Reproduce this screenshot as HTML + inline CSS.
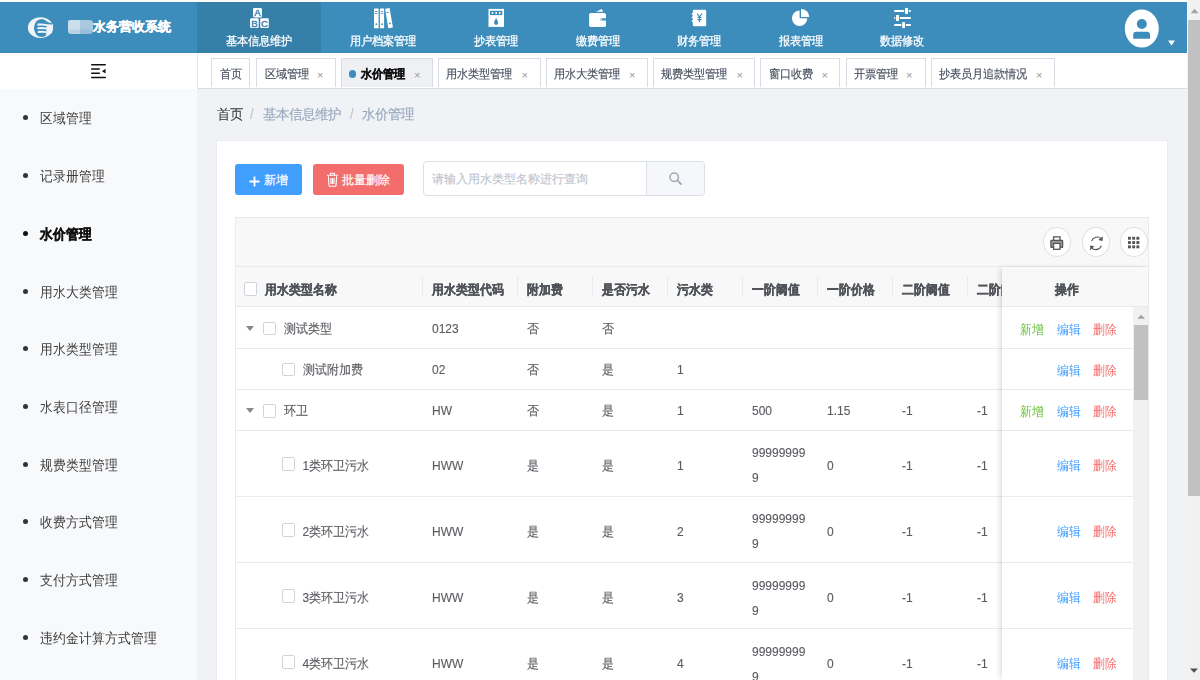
<!DOCTYPE html>
<html><head><meta charset="utf-8">
<style>
*{margin:0;padding:0;box-sizing:border-box}
html,body{width:1200px;height:680px;overflow:hidden;background:#f0f2f5;font-family:"Liberation Sans",sans-serif;}
.sk{-webkit-text-stroke:0.25px currentColor}
.sk2{-webkit-text-stroke:0.12px currentColor}
.a{position:absolute;white-space:nowrap}
#top{left:0;top:0;width:1187px;height:2px;background:#fefcfb}
#hdr{left:0;top:2px;width:1187px;height:51px;background:#3c8dbc}
.nav{top:2px;height:51px;color:#fff;font-size:11px;text-align:center}
.nav .t{position:absolute;left:0;right:0;top:31.5px;line-height:14px;-webkit-text-stroke:0.25px #fff;transform:scaleY(1.07);transform-origin:50% 60%}
.nav.act{background:#367fa9}
#side{left:0;top:89px;width:197px;height:591px;background:#f8f9fb}
#tog{left:0;top:53px;width:197px;height:36px;background:#fff}
#tabs{left:197px;top:53px;width:990px;height:36px;background:#fff;border-bottom:1px solid #d8dce5;border-left:1px solid #e6e6e6}
.tab{top:58px;height:29px;border:1px solid #d8dce5;border-bottom:none;background:#fff;font-size:11px;color:#495060;line-height:31px}
.tab .t{position:absolute;top:0;-webkit-text-stroke:0.15px currentColor;transform:scaleY(1.07);transform-origin:50% 53%}
.tab .x{position:absolute;font-size:11px;color:#999;top:0.5px}
.mi{left:0;width:197px;font-size:13px;color:#3d3d3d;height:20px;line-height:20px}
.mi .d{position:absolute;left:23px;top:6.5px;width:5px;height:5px;border-radius:50%;background:#333}
.mi .t{position:absolute;left:40px;top:0.6px;transform:scaleY(1.1);transform-origin:50% 55%}
#sb{left:1187px;top:0;width:13px;height:680px;background:#f1f1f1}
.bc{top:104.5px;font-size:13.25px;line-height:20px;-webkit-text-stroke:0.15px currentColor;transform:scaleY(1.04);transform-origin:50% 52%}
#card{left:216px;top:140px;width:951.5px;height:545px;background:#fff;border:1px solid #e9ebef}
.btn{top:164px;height:30.5px;border-radius:3px;color:#fff;font-size:12px;line-height:32px;-webkit-text-stroke:0.2px #fff}
#tbl{left:235px;top:217px;width:914px;height:463px;border:1px solid #e8eaec;border-bottom:none;background:#fff}
#tbar{left:236px;top:218px;width:912px;height:49px;background:#f8f8f9;border-bottom:1px solid #e8eaec}
#thd{left:236px;top:267px;width:912px;height:40px;background:#f8f8f9;border-bottom:1px solid #e8eaec}
.th{top:280px;font-size:12px;font-weight:bold;color:#505459;line-height:20px;transform:scaleY(1.1);transform-origin:50% 50%;-webkit-text-stroke:0.3px currentColor}
.sep{top:276px;width:1px;height:21px;background:#e8eaec}
.row{left:236px;width:897px;border-bottom:1px solid #e8eaec}
.td{font-size:12px;color:#5a5c61;line-height:20px;transform:scaleY(1.08);transform-origin:50% 50%;-webkit-text-stroke:0.12px currentColor}
.cb{width:13px;height:13.5px;border:1.4px solid #cfd4dc;border-radius:2px;background:#fff}
.tri{width:0;height:0;border-left:4.5px solid transparent;border-right:4.5px solid transparent;border-top:5px solid #888}
.op{font-size:12px;line-height:20px;transform:scaleY(1.1);transform-origin:50% 50%}
.circ{top:226.5px;width:28px;height:30.5px;border:1px solid #dcdfe6;border-radius:50%;background:#fff}
</style></head><body>
<div class="a" id="top"></div>
<div class="a" id="hdr"></div>
<!-- logo -->
<svg class="a" style="left:0;top:0" width="200" height="53" viewBox="0 0 200 53">
<ellipse cx="40.45" cy="27.7" rx="12.55" ry="10.4" fill="#eef4f8"/>
<ellipse cx="41.6" cy="28" rx="7.6" ry="9.1" fill="#3c8dbc"/>
<path d="M37.4 23.6 Q42 23 46.5 24 L53 24.5 L53 26 L46.8 25.9 Q42 25.3 37.4 25.8Z" fill="#eef4f8"/>
<path d="M37.4 27.3 Q42 26.8 46.8 27.6 L46.8 29.4 Q42 28.9 37.4 29.3Z" fill="#eef4f8"/>
<path d="M37.8 31.0 Q42 30.6 46.3 31.3 L46.3 33.0 Q42 32.5 37.8 33.0Z" fill="#eef4f8"/>
<path d="M46.8 24.2 L53.2 24.5 L52 33 L46 35.5 Z" fill="#eef4f8"/>
<path d="M45.5 21.6 L52.5 23.6 L52.5 24.5 L46.8 24.2Z" fill="#3c8dbc"/>
</svg>
<div class="a" style="left:68px;top:19.5px;width:12px;height:14.5px;background:#cbdfeb;border-radius:2px 0 0 3px;filter:blur(0.5px)"></div>
<div class="a" style="left:80px;top:19.5px;width:12.5px;height:14.5px;background:#a8c8dd;border-radius:0 3px 4px 0;filter:blur(0.5px)"></div>
<div class="a" style="left:68px;top:30px;width:24px;height:4px;background:rgba(60,141,188,0.18);filter:blur(0.8px)"></div>
<div class="a" style="left:93px;top:19px;font-size:13px;font-weight:bold;color:#fff;line-height:16px;-webkit-text-stroke:0.3px #fff">水务营收系统</div>

<div class="a nav act" style="left:197px;width:124px"><div class="t">基本信息维护</div></div>
<div class="a nav" style="left:321px;width:124px"><div class="t">用户档案管理</div></div>
<div class="a nav" style="left:445px;width:102px"><div class="t">抄表管理</div></div>
<div class="a nav" style="left:547px;width:101px"><div class="t">缴费管理</div></div>
<div class="a nav" style="left:648px;width:102px"><div class="t">财务管理</div></div>
<div class="a nav" style="left:750px;width:101px"><div class="t">报表管理</div></div>
<div class="a nav" style="left:851px;width:102px"><div class="t">数据修改</div></div>

<!-- nav icons -->
<svg class="a" style="left:0;top:0" width="1187" height="53" viewBox="0 0 1187 53">
 <g fill="#fff">
  <rect x="253" y="8" width="9" height="9.4" rx="1.3"/>
  <rect x="250.1" y="18.2" width="8.6" height="9.9" rx="1.3"/>
  <rect x="260.2" y="18.2" width="8.6" height="9.9" rx="1.3"/>
 </g>
 <g fill="#367fa9" font-family="Liberation Sans" font-size="9.6" stroke="#367fa9" stroke-width="0.35">
  <text x="257.5" y="16" text-anchor="middle">A</text>
  <text x="254.4" y="26.8" text-anchor="middle">B</text>
  <text x="264.5" y="26.8" text-anchor="middle">C</text>
 </g>
 <!-- binders -->
 <g fill="#fff">
  <rect x="374" y="8.5" width="4.6" height="19.8" rx="0.5"/>
  <rect x="379.9" y="8.5" width="4.2" height="19.8" rx="0.5"/>
  <path d="M385.1 8.7 L389.6 8 L392.9 27.4 L388.3 28.3Z"/>
 </g>
 <g fill="#3c8dbc">
  <rect x="375" y="11.2" width="2.6" height="0.8"/><rect x="375" y="13.2" width="2.6" height="0.8"/>
  <rect x="380.7" y="11.2" width="2.6" height="0.8"/><rect x="380.7" y="13.2" width="2.6" height="0.8"/>
  <circle cx="376.3" cy="24.2" r="0.9"/><circle cx="382" cy="24.2" r="0.9"/><circle cx="389.9" cy="23.3" r="0.9"/>
  <path d="M386.3 12.4 L388.7 12 L388.9 12.8 L386.5 13.2Z"/>
 </g>
 <!-- meter -->
 <rect x="488.5" y="8.9" width="15.5" height="18" fill="#fff"/>
 <rect x="490" y="10.8" width="12.3" height="4.3" fill="#3c8dbc"/>
 <g fill="#fff"><rect x="491.8" y="12" width="1.4" height="2"/><rect x="495.5" y="12" width="1.4" height="2"/><rect x="499.1" y="12" width="1.4" height="2"/></g>
 <path d="M496.1 18 Q494 21.5 494 22.8 A2.1 2.1 0 0 0 498.2 22.8 Q498.2 21.5 496.1 18Z" fill="#3c8dbc"/>
 <!-- wallet -->
 <rect x="589.1" y="12.9" width="16.9" height="14" rx="1.6" fill="#fff"/>
 <path d="M596 11.8 L601.8 8.9 L603.2 11.8Z" fill="#fff"/>
 <rect x="600.5" y="18.2" width="6" height="2.4" rx="1.2" fill="#3c8dbc"/>
 <circle cx="601.8" cy="19.4" r="0.6" fill="#fff"/>
 <!-- yen book -->
 <rect x="692.8" y="9.8" width="13.4" height="16.4" rx="1.2" fill="#fff"/>
 <g fill="#fff"><circle cx="692.6" cy="14" r="0.9"/><circle cx="692.6" cy="17.5" r="0.9"/><circle cx="692.6" cy="21" r="0.9"/></g>
 <path d="M697.2 13.6 L699.5 17 L701.8 13.6 M699.5 17 L699.5 22.3 M697.5 17.5 H701.5 M697.5 19.6 H701.5" stroke="#3c8dbc" stroke-width="1.1" fill="none"/>
 <!-- pie -->
 <path d="M799.6 10.5 A7.7 7.7 0 1 0 807.3 18.2 L799.6 18.2Z" fill="#fff"/>
 <path d="M801 8.9 A8.2 8.2 0 0 1 809.2 17.1 L801 17.1Z" fill="#fff"/>
 <!-- sliders -->
 <g fill="#fff">
  <rect x="894" y="10.1" width="17" height="1.8" rx="0.9"/>
  <rect x="894" y="17.1" width="17" height="1.8" rx="0.9"/>
  <rect x="894" y="24.1" width="17" height="1.8" rx="0.9"/>
 </g>
 <g fill="#3c8dbc">
  <rect x="904.2" y="7.4" width="4.6" height="7"/>
  <rect x="895.2" y="14.6" width="4.6" height="6.8"/>
  <rect x="901.4" y="21.6" width="4.4" height="7"/>
 </g>
 <g fill="#fff">
  <rect x="905" y="7.9" width="3" height="6"/>
  <rect x="896" y="15.1" width="3" height="5.8"/>
  <rect x="902.2" y="22.1" width="2.8" height="6"/>
 </g>
 <!-- avatar -->
 <ellipse cx="1141.8" cy="28.6" rx="17" ry="19" fill="#fff"/>
 <circle cx="1141.8" cy="24" r="5" fill="#3c8dbc"/>
 <path d="M1133.2 38.8 V34.8 Q1133.2 31.8 1136.2 31.8 H1147 Q1150 31.8 1150 34.8 V38.8Z" fill="#3c8dbc"/>
 <path d="M1168 40.6 H1175 L1171.5 45.4Z" fill="#fff"/>
</svg>

<div class="a" id="tog"></div>
<svg class="a" style="left:90px;top:63px" width="17" height="16" viewBox="0 0 17 16">
 <g fill="#111">
  <rect x="1" y="1" width="15" height="1.5" rx="0.7"/>
  <rect x="1" y="5.2" width="9" height="1.5" rx="0.7"/>
  <rect x="1" y="9.5" width="9" height="1.5" rx="0.7"/>
  <rect x="1" y="13.7" width="15" height="1.5" rx="0.7"/>
  <path d="M15.5 5.8 L12 8.2 L15.5 10.6Z"/>
 </g>
</svg>
<div class="a" id="side"></div>
<div class="a" id="tabs"></div>

<!-- tabs -->
<div class="a tab" style="left:211px;width:39px;"><span class="t" style="left:8px">首页</span></div>
<div class="a tab" style="left:256px;width:80px;"><span class="t" style="left:7.5px">区域管理</span><span class="x" style="left:60px">×</span></div>
<div class="a tab" style="left:341px;width:91.5px;background:#eef0f4"><span style="position:absolute;left:6.5px;top:11px;width:7.5px;height:7.5px;border-radius:50%;background:#3c8dbc"></span><span class="t" style="left:19px;font-weight:bold;color:#111;-webkit-text-stroke:0.3px #111">水价管理</span><span class="x" style="left:72px">×</span></div>
<div class="a tab" style="left:438px;width:102.5px;"><span class="t" style="left:7px">用水类型管理</span><span class="x" style="left:82.5px">×</span></div>
<div class="a tab" style="left:545.5px;width:102.5px;"><span class="t" style="left:7.25px">用水大类管理</span><span class="x" style="left:82.5px">×</span></div>
<div class="a tab" style="left:653px;width:101.5px;"><span class="t" style="left:7.25px">规费类型管理</span><span class="x" style="left:82.5px">×</span></div>
<div class="a tab" style="left:760px;width:80px;"><span class="t" style="left:7.75px">窗口收费</span><span class="x" style="left:60.5px">×</span></div>
<div class="a tab" style="left:845.5px;width:80px;"><span class="t" style="left:7.25px">开票管理</span><span class="x" style="left:59.5px">×</span></div>
<div class="a tab" style="left:930.5px;width:124px;"><span class="t" style="left:7.25px">抄表员月追款情况</span><span class="x" style="left:104.5px">×</span></div>

<!-- sidebar menu -->
<div class="a mi" style="top:108px"><span class="d"></span><span class="t">区域管理</span></div>
<div class="a mi" style="top:166px"><span class="d"></span><span class="t">记录册管理</span></div>
<div class="a mi" style="top:224px;font-weight:bold;color:#111"><span class="d" style="background:#111"></span><span class="t" style="-webkit-text-stroke:0.35px #111">水价管理</span></div>
<div class="a mi" style="top:282px"><span class="d"></span><span class="t">用水大类管理</span></div>
<div class="a mi" style="top:339.5px"><span class="d"></span><span class="t">用水类型管理</span></div>
<div class="a mi" style="top:397px"><span class="d"></span><span class="t">水表口径管理</span></div>
<div class="a mi" style="top:455px"><span class="d"></span><span class="t">规费类型管理</span></div>
<div class="a mi" style="top:512.5px"><span class="d"></span><span class="t">收费方式管理</span></div>
<div class="a mi" style="top:570px"><span class="d"></span><span class="t">支付方式管理</span></div>
<div class="a mi" style="top:628px"><span class="d"></span><span class="t">违约金计算方式管理</span></div>

<!-- breadcrumb -->
<div class="a bc" style="left:217px;color:#303133;-webkit-text-stroke:0">首页</div>
<div class="a bc" style="left:250px;color:#c0c4cc">/</div>
<div class="a bc" style="left:263px;color:#97a8be">基本信息维护</div>
<div class="a bc" style="left:350px;color:#c0c4cc">/</div>
<div class="a bc" style="left:362px;color:#97a8be">水价管理</div>

<div class="a" id="card"></div>
<div class="a btn" style="left:235px;width:67px;background:#409eff">
 <svg class="a" style="left:13.5px;top:12px" width="11" height="11" viewBox="0 0 11 11"><path d="M5.5 0.5V10.5M0.5 5.5H10.5" stroke="#fff" stroke-width="1.8"/></svg>
 <span class="a" style="left:28.5px;top:0">新增</span>
</div>
<div class="a btn" style="left:313px;width:91px;background:#f46d6d">
 <svg class="a" style="left:12.5px;top:8px" width="13" height="15" viewBox="0 0 13 15"><path d="M1 3.2H12 M4.6 3.2V1.2H8.4V3.2 M2.4 4.2 L3 13.6 Q3.1 14.2 3.7 14.2 H9.3 Q9.9 14.2 10 13.6 L10.6 4.2 M5 6V12 M6.5 6V12 M8 6V12" stroke="#fff" stroke-width="1.1" fill="none"/></svg>
 <span class="a" style="left:28.5px;top:0">批量删除</span>
</div>
<!-- search -->
<div class="a" style="left:423px;top:161px;width:282px;height:35px;border:1px solid #dcdfe6;border-radius:4px;background:#fff;overflow:hidden">
 <div class="a" style="left:222px;top:0;width:59px;height:33px;background:#f5f7fa;border-left:1px solid #dcdfe6"></div>
 <span class="a" style="left:7.5px;top:6.5px;font-size:12.2px;line-height:20px;color:#c0c4cc;-webkit-text-stroke:0.15px #c0c4cc">请输入用水类型名称进行查询</span>
 <svg class="a" style="left:245px;top:10px" width="13" height="13" viewBox="0 0 13 13"><circle cx="5.2" cy="5.2" r="4.2" stroke="#a8abb2" stroke-width="1.6" fill="none"/><path d="M8.3 8.3L12 12" stroke="#a8abb2" stroke-width="1.8" stroke-linecap="round"/></svg>
</div>

<!-- table -->
<div class="a" id="tbl"></div>
<div class="a" id="tbar"></div>
<div class="a circ" style="left:1042.8px"></div>
<div class="a circ" style="left:1082.2px"></div>
<div class="a circ" style="left:1120.2px"></div>
<svg class="a" style="left:1040px;top:230px" width="110" height="24" viewBox="1040 230 110 24">
 <g stroke="#555" stroke-width="1.3">
  <path d="M1053.6 240.2 V236.8 H1060 V240.2" fill="none"/>
  <path d="M1053.4 247.4 H1051.4 Q1050.9 247.4 1050.9 246.9 V241 Q1050.9 240.3 1051.6 240.3 H1061.9 Q1062.6 240.3 1062.6 241 V246.9 Q1062.6 247.4 1062.1 247.4 H1060.2" fill="#9a9a9a"/>
  <rect x="1053.6" y="243.4" width="6.4" height="5.9" fill="#fff"/>
 </g>
 <g fill="none" stroke="#555" stroke-width="1.15">
  <path d="M1091.6 241.2 A5.9 5.9 0 0 1 1101.2 238.6"/>
  <path d="M1101.4 245.6 A5.9 5.9 0 0 1 1091.6 247.8"/>
 </g>
 <path d="M1102.8 236.2 L1102.6 240.9 L1098.4 240.1Z" fill="#555"/>
 <path d="M1090 250.2 L1090.2 245.5 L1094.4 246.3Z" fill="#555"/>
 <g fill="#555">
  <rect x="1128" y="236.8" width="2.9" height="2.9"/><rect x="1132.2" y="236.8" width="2.9" height="2.9"/><rect x="1136.4" y="236.8" width="2.9" height="2.9"/>
  <rect x="1128" y="241.1" width="2.9" height="2.9"/><rect x="1132.2" y="241.1" width="2.9" height="2.9"/><rect x="1136.4" y="241.1" width="2.9" height="2.9"/>
  <rect x="1128" y="245.4" width="2.9" height="2.9"/><rect x="1132.2" y="245.4" width="2.9" height="2.9"/><rect x="1136.4" y="245.4" width="2.9" height="2.9"/>
 </g>
</svg>

<div class="a" id="thd"></div>
<div class="a cb" style="left:244px;top:282px"></div>
<div class="a th" style="left:265px">用水类型名称</div>
<div class="a sep" style="left:422px"></div>
<div class="a th" style="left:432px">用水类型代码</div>
<div class="a sep" style="left:517px"></div>
<div class="a th" style="left:527px">附加费</div>
<div class="a sep" style="left:592px"></div>
<div class="a th" style="left:602px">是否污水</div>
<div class="a sep" style="left:667px"></div>
<div class="a th" style="left:677px">污水类</div>
<div class="a sep" style="left:742px"></div>
<div class="a th" style="left:752px">一阶阈值</div>
<div class="a sep" style="left:817px"></div>
<div class="a th" style="left:827px">一阶价格</div>
<div class="a sep" style="left:892px"></div>
<div class="a th" style="left:902px">二阶阈值</div>
<div class="a sep" style="left:967px"></div>
<div class="a th" style="left:977px">二阶阈值</div>

<!-- rows -->
<!--ROWS-->
<div class="a row" style="top:307.5px;height:41.2px"></div>
<div class="a tri" style="left:246px;top:325.6px"></div>
<div class="a cb" style="left:263px;top:321.6px"></div>
<div class="a td" style="left:284px;top:318.6px">测试类型</div>
<div class="a td" style="left:432px;top:318.6px">0123</div>
<div class="a td" style="left:527px;top:318.6px">否</div>
<div class="a td" style="left:602px;top:318.6px">否</div>
<div class="a row" style="top:348.7px;height:41.2px"></div>
<div class="a cb" style="left:281.6px;top:362.8px"></div>
<div class="a td" style="left:302.5px;top:359.8px">测试附加费</div>
<div class="a td" style="left:432px;top:359.8px">02</div>
<div class="a td" style="left:527px;top:359.8px">否</div>
<div class="a td" style="left:602px;top:359.8px">是</div>
<div class="a td" style="left:677px;top:359.8px">1</div>
<div class="a row" style="top:389.9px;height:41.2px"></div>
<div class="a tri" style="left:246px;top:408.0px"></div>
<div class="a cb" style="left:263px;top:404.0px"></div>
<div class="a td" style="left:284px;top:401.0px">环卫</div>
<div class="a td" style="left:432px;top:401.0px">HW</div>
<div class="a td" style="left:527px;top:401.0px">否</div>
<div class="a td" style="left:602px;top:401.0px">是</div>
<div class="a td" style="left:677px;top:401.0px">1</div>
<div class="a td" style="left:827px;top:401.0px">1.15</div>
<div class="a td" style="left:902px;top:401.0px">-1</div>
<div class="a td" style="left:977px;top:401.0px">-1</div>
<div class="a td" style="left:752px;top:401.0px">500</div>
<div class="a row" style="top:431.1px;height:66.1px"></div>
<div class="a cb" style="left:281.6px;top:457.2px"></div>
<div class="a td" style="left:302.5px;top:456.2px">1类环卫污水</div>
<div class="a td" style="left:432px;top:456.2px">HWW</div>
<div class="a td" style="left:527px;top:456.2px">是</div>
<div class="a td" style="left:602px;top:456.2px">是</div>
<div class="a td" style="left:677px;top:456.2px">1</div>
<div class="a td" style="left:827px;top:456.2px">0</div>
<div class="a td" style="left:902px;top:456.2px">-1</div>
<div class="a td" style="left:977px;top:456.2px">-1</div>
<div class="a td" style="left:752px;top:443.4px;line-height:23px">99999999<br>9</div>
<div class="a row" style="top:497.2px;height:66.1px"></div>
<div class="a cb" style="left:281.6px;top:523.2px"></div>
<div class="a td" style="left:302.5px;top:522.2px">2类环卫污水</div>
<div class="a td" style="left:432px;top:522.2px">HWW</div>
<div class="a td" style="left:527px;top:522.2px">是</div>
<div class="a td" style="left:602px;top:522.2px">是</div>
<div class="a td" style="left:677px;top:522.2px">2</div>
<div class="a td" style="left:827px;top:522.2px">0</div>
<div class="a td" style="left:902px;top:522.2px">-1</div>
<div class="a td" style="left:977px;top:522.2px">-1</div>
<div class="a td" style="left:752px;top:509.4px;line-height:23px">99999999<br>9</div>
<div class="a row" style="top:563.3px;height:66.1px"></div>
<div class="a cb" style="left:281.6px;top:589.3px"></div>
<div class="a td" style="left:302.5px;top:588.3px">3类环卫污水</div>
<div class="a td" style="left:432px;top:588.3px">HWW</div>
<div class="a td" style="left:527px;top:588.3px">是</div>
<div class="a td" style="left:602px;top:588.3px">是</div>
<div class="a td" style="left:677px;top:588.3px">3</div>
<div class="a td" style="left:827px;top:588.3px">0</div>
<div class="a td" style="left:902px;top:588.3px">-1</div>
<div class="a td" style="left:977px;top:588.3px">-1</div>
<div class="a td" style="left:752px;top:575.5px;line-height:23px">99999999<br>9</div>
<div class="a row" style="top:629.4px;height:66.1px"></div>
<div class="a cb" style="left:281.6px;top:655.4px"></div>
<div class="a td" style="left:302.5px;top:654.4px">4类环卫污水</div>
<div class="a td" style="left:432px;top:654.4px">HWW</div>
<div class="a td" style="left:527px;top:654.4px">是</div>
<div class="a td" style="left:602px;top:654.4px">是</div>
<div class="a td" style="left:677px;top:654.4px">4</div>
<div class="a td" style="left:827px;top:654.4px">0</div>
<div class="a td" style="left:902px;top:654.4px">-1</div>
<div class="a td" style="left:977px;top:654.4px">-1</div>
<div class="a td" style="left:752px;top:641.6px;line-height:23px">99999999<br>9</div>
<div class="a" id="fixr" style="left:1001.7px;top:267px;width:146.3px;height:413px;background:#fff;box-shadow:-3px 0 6px -2px rgba(0,0,0,0.18)"></div>
<div class="a" style="left:1001.7px;top:267px;width:146.3px;height:40px;background:#f8f8f9;border-bottom:1px solid #e8eaec"></div>
<div class="a th" style="left:1055px">操作</div>
<div class="a" style="left:1001.7px;top:307.5px;width:131.3px;height:41.2px;border-bottom:1px solid #e8eaec"></div>
<div class="a op" style="left:1019.5px;top:319.6px;color:#67c23a">新增</div>
<div class="a op" style="left:1057px;top:319.6px;color:#409eff">编辑</div>
<div class="a op" style="left:1093px;top:319.6px;color:#f56c6c">删除</div>
<div class="a" style="left:1001.7px;top:348.7px;width:131.3px;height:41.2px;border-bottom:1px solid #e8eaec"></div>
<div class="a op" style="left:1057px;top:360.8px;color:#409eff">编辑</div>
<div class="a op" style="left:1093px;top:360.8px;color:#f56c6c">删除</div>
<div class="a" style="left:1001.7px;top:389.9px;width:131.3px;height:41.2px;border-bottom:1px solid #e8eaec"></div>
<div class="a op" style="left:1019.5px;top:402.0px;color:#67c23a">新增</div>
<div class="a op" style="left:1057px;top:402.0px;color:#409eff">编辑</div>
<div class="a op" style="left:1093px;top:402.0px;color:#f56c6c">删除</div>
<div class="a" style="left:1001.7px;top:431.1px;width:131.3px;height:66.1px;border-bottom:1px solid #e8eaec"></div>
<div class="a op" style="left:1057px;top:455.7px;color:#409eff">编辑</div>
<div class="a op" style="left:1093px;top:455.7px;color:#f56c6c">删除</div>
<div class="a" style="left:1001.7px;top:497.2px;width:131.3px;height:66.1px;border-bottom:1px solid #e8eaec"></div>
<div class="a op" style="left:1057px;top:521.8px;color:#409eff">编辑</div>
<div class="a op" style="left:1093px;top:521.8px;color:#f56c6c">删除</div>
<div class="a" style="left:1001.7px;top:563.3px;width:131.3px;height:66.1px;border-bottom:1px solid #e8eaec"></div>
<div class="a op" style="left:1057px;top:587.8px;color:#409eff">编辑</div>
<div class="a op" style="left:1093px;top:587.8px;color:#f56c6c">删除</div>
<div class="a" style="left:1001.7px;top:629.4px;width:131.3px;height:66.1px;border-bottom:1px solid #e8eaec"></div>
<div class="a op" style="left:1057px;top:653.9px;color:#409eff">编辑</div>
<div class="a op" style="left:1093px;top:653.9px;color:#f56c6c">删除</div>
<div class="a" style="left:1133px;top:307px;width:15px;height:373px;background:#f1f1f1"></div>
<div class="a" style="left:1134px;top:325px;width:14px;height:75px;background:#c1c1c1"></div>
<svg class="a" style="left:1133px;top:307px" width="15" height="18"><path d="M4.3 11.8 H12.1 L8.2 7.7Z" fill="#a3a3a3"/></svg>
<!--/ROWS-->
<div class="a" id="sb"></div>
<div class="a" style="left:1187px;top:0;width:1px;height:53px;background:#fdfdfd"></div>
<div class="a" style="left:1188px;top:19.5px;width:12px;height:476.5px;background:#c1c1c1"></div>
<svg class="a" style="left:1187px;top:0" width="13" height="680" viewBox="0 0 13 680">
 <path d="M3.8 13.3 H11.4 L7.6 8.8Z" fill="#a3a3a3"/>
 <path d="M3 668.5 H11 L7 672.8Z" fill="#505050"/>
</svg>
</body></html>
